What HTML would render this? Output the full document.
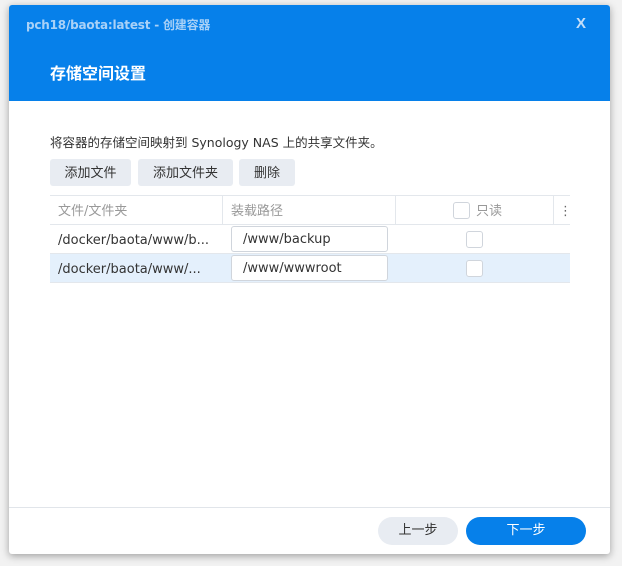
<!DOCTYPE html>
<html><head><meta charset="utf-8"><style>
*{box-sizing:border-box;margin:0;padding:0}
body{width:622px;height:566px;background:#f2f2f2;position:relative;overflow:hidden;font-family:"DejaVu Sans","Noto Sans CJK SC",sans-serif;}
.dlg{position:absolute;left:9px;top:5px;width:601px;height:549px;background:#fff;border-radius:3px;box-shadow:0 2px 8px rgba(0,0,0,.35);overflow:hidden}
.hd{position:absolute;left:0;top:0;width:601px;height:96px;background:#0680ea}
.t1{position:absolute;left:17px;top:11px;font-size:12px;font-weight:bold;color:#a9d1f7;letter-spacing:-0.2px}
.x{position:absolute;left:567px;top:10px;font-size:15px;color:#c4def9;font-family:"Liberation Sans",sans-serif;font-weight:bold}
.t2{position:absolute;left:41px;top:55px;font-size:16px;font-weight:bold;color:#fff;font-family:"Noto Sans CJK SC",sans-serif}
.desc{position:absolute;left:41px;top:127px;font-size:12.5px;color:#333}
.btn{position:absolute;top:154px;height:27px;background:#e8ecf2;border-radius:3px;font-size:13px;color:#333;text-align:center;line-height:29px}
.tbl{position:absolute;left:41px;top:190px;width:520px}
.row{position:absolute;left:0;width:520px;height:29px;border-bottom:1px solid #e3e7ec;font-size:13px;line-height:31px}
.sep{position:absolute;top:0;width:1px;height:29px;background:#e3e7ec}
.cb{position:absolute;width:17px;height:17px;border:1px solid #d0d5dc;border-radius:3px;background:#fff}
.inp{position:absolute;left:181px;top:1px;width:157px;height:26px;border:1px solid #d0d5dc;border-radius:3px;background:#fff;padding-left:11px;line-height:26px;color:#333}
.ft{position:absolute;left:0;top:502px;width:601px;height:1px;background:#e1e5ea}
.fb{position:absolute;top:512px;height:28px;border-radius:14px;font-size:13px;text-align:center;line-height:28px}
</style></head><body>
<div class="dlg">
<div class="hd"><div class="t1">pch18/baota:latest - 创建容器</div><div class="x">X</div><div class="t2">存储空间设置</div></div>
<div class="desc">将容器的存储空间映射到 Synology NAS 上的共享文件夹。</div>
<div class="btn" style="left:41px;width:81px">添加文件</div>
<div class="btn" style="left:129px;width:95px">添加文件夹</div>
<div class="btn" style="left:230px;width:56px">删除</div>
<div class="tbl">
<div class="row" style="top:0;border-top:1px solid #e3e7ec;height:30px;color:#999">
<span style="position:absolute;left:8px">文件/文件夹</span>
<div class="sep" style="left:172px"></div>
<span style="position:absolute;left:181px">装载路径</span>
<div class="sep" style="left:345px"></div>
<div class="cb" style="left:403px;top:6px"></div><span style="position:absolute;left:426px">只读</span>
<div class="sep" style="left:503px"></div>
<span style="position:absolute;left:509px;color:#666">⋮</span>
</div>
<div class="row" style="top:30px;color:#333"><span style="position:absolute;left:8px">/docker/baota/www/b...</span><div class="inp">/www/backup</div><div class="cb" style="left:416px;top:6px"></div></div>
<div class="row" style="top:59px;background:#e4f0fc;color:#333"><span style="position:absolute;left:8px">/docker/baota/www/...</span><div class="inp">/www/wwwroot</div><div class="cb" style="left:416px;top:6px"></div></div>
</div>
<div class="ft"></div>
<div class="fb" style="left:369px;width:80px;background:#e8ecf2;color:#333">上一步</div>
<div class="fb" style="left:457px;width:120px;background:#0680ea;color:#fff">下一步</div>
</div>
</body></html>
